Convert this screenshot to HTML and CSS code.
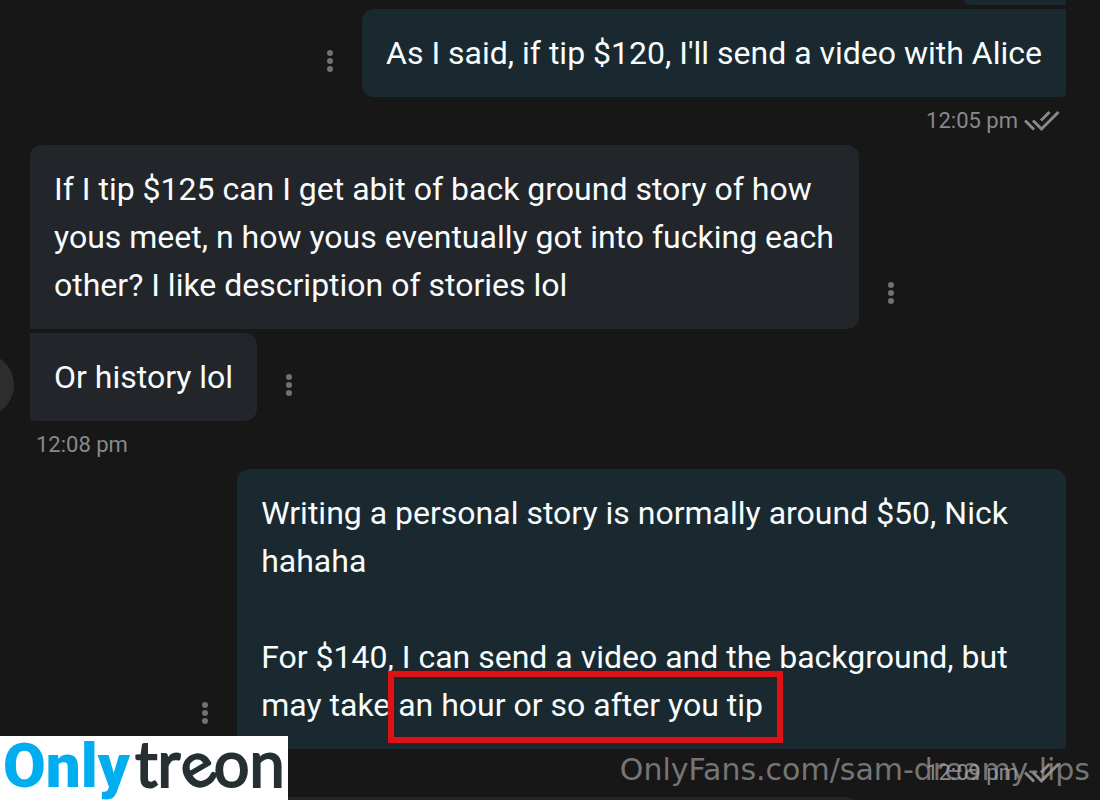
FILE: index.html
```html
<!DOCTYPE html>
<html lang="en">
<head>
<meta charset="utf-8">
<title>Messages</title>
<link rel="stylesheet" href="styles.css">
</head>
<body>
<svg class="defs" aria-hidden="true">
  <symbol id="dots" viewBox="0 0 24 24"><circle cx="12" cy="4" r="3"/><circle cx="12" cy="12" r="3"/><circle cx="12" cy="20" r="3"/></symbol>
  <symbol id="read" viewBox="0 0 36 22"><path d="M1 10.500L10 19.500M9 10.500L17.500 19L34.500 2M17 10.500L25.500 2"/></symbol>
</svg>
<main class="chat">
  <div class="bubble sent previous"></div>
  <div class="row outgoing">
    <button class="more" aria-label="Message options"><svg><use href="#dots"/></svg></button>
    <p class="bubble sent last">As I said, if tip $120, I'll send a video with Alice</p>
  </div>
  <div class="meta outgoing"><time>12:05 pm</time><svg class="check"><use href="#read"/></svg></div>

  <div class="row">
    <p class="bubble received first">If I tip $125 can I get abit of back ground story of how yous meet, n how yous eventually got into fucking each other? I like description of stories lol</p>
    <button class="more" aria-label="Message options"><svg><use href="#dots"/></svg></button>
  </div>
  <div class="row following">
    <span class="avatar"></span>
    <p class="bubble received">Or history lol</p>
    <button class="more" aria-label="Message options"><svg><use href="#dots"/></svg></button>
  </div>
  <div class="meta"><time>12:08 pm</time></div>

  <div class="row outgoing">
    <button class="more" aria-label="Message options"><svg><use href="#dots"/></svg></button>
    <p class="bubble sent">Writing a personal story is normally around $50, Nick hahaha<br><br>For $140, I can send a video and the background, but may take <span class="marked">an hour or so after you tip</span></p>
  </div>
  <div class="meta outgoing"><time>12:09 pm</time><svg class="check"><use href="#read"/></svg></div>
  <div class="bubble received first next"></div>
</main>
<div class="logo"><span class="only">Only</span><span class="treon">tr<span class="tilted">e</span>on</span></div>
<div class="watermark">OnlyFans.com/sam-dreamy-lips</div>
</body>
</html>
```
FILE: styles.css
```css
* { box-sizing: border-box; }
body {
  margin: 0;
  height: 100vh;
  position: relative;
  overflow: hidden;
  background: #171718;
  color: #f8fcfd;
  font-family: Roboto, sans-serif;
  font-size: 32px;
  line-height: 48px;
}
.defs { display: none; }
.chat {
  display: flex;
  flex-direction: column;
  padding: 0 34px 0 30px;
}
.row {
  display: flex;
  align-items: flex-end;
  position: relative;
}
.row.outgoing, .meta.outgoing { justify-content: flex-end; }
.following { margin-top: 4px; }
.bubble {
  margin: 0;
  padding: 20px 24px;
  max-width: 80%;
}
.sent {
  background: #19292f;
  border-radius: 12px 12px 4px 12px;
}
.sent.last { border-radius: 12px 0 4px 12px; }
.received {
  background: #222529;
  border-radius: 0 12px 12px 4px;
}
.received.first { border-radius: 12px 12px 12px 0; }
.bubble.previous {
  align-self: flex-end;
  width: 102px;
  height: 5px;
  padding: 0;
  margin-bottom: 4px;
  border-radius: 0 0 0 12px;
}
.bubble.next { width: 80%; }
.more {
  flex: none;
  width: 24px;
  height: 24px;
  margin: 0 20px 24px;
  padding: 0;
  border: 0;
  background: none;
}
.more svg { display: block; width: 24px; height: 24px; fill: #707173; }
.meta {
  display: flex;
  align-items: center;
  gap: 6px;
  height: 48px;
  padding: 0 6px;
  color: #87898b;
  font-size: 22px;
}
.check {
  width: 36px;
  height: 22px;
  fill: none;
  stroke: #87898b;
  stroke-width: 3;
}
.avatar {
  position: absolute;
  left: -80px;
  bottom: 4px;
  width: 64px;
  height: 64px;
  border-radius: 50%;
  background: #2b2d2e;
}
.marked { position: relative; white-space: nowrap; }
.marked::after {
  content: "";
  position: absolute;
  inset: -15px -20px -19px -10px;
  border: 6px solid #dc1215;
  box-shadow: 0 0 2px #5a1114, inset 0 0 2px #5a1114;
}
.logo {
  position: absolute;
  left: 0;
  bottom: 0;
  display: flex;
  align-items: baseline;
  gap: 5px;
  width: 288px;
  height: 64px;
  padding-left: 3px;
  background: #fff;
  line-height: 54px;
}
.only { color: #00aeef; font-size: 62px; font-weight: 900; }
.treon {
  color: #263033;
  font-family: Lato, sans-serif;
  font-size: 63px;
  -webkit-text-stroke: 2px #263033;
}
.tilted { display: inline-block; transform: rotate(-30deg); transform-origin: 50% 62%; }
.watermark {
  position: absolute;
  right: 10px;
  bottom: 6px;
  color: rgba(160, 160, 160, .7);
  font-family: "DejaVu Sans", sans-serif;
  font-size: 30px;
}
```
